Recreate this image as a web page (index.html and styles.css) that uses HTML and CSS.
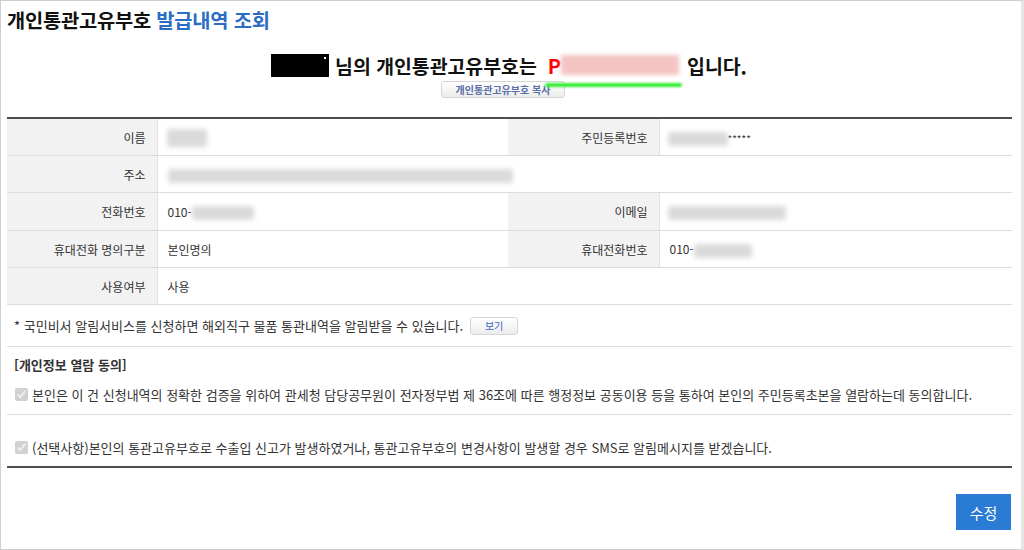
FILE: index.html
```html
<!DOCTYPE html>
<html lang="ko">
<head>
<meta charset="utf-8">
<link rel="stylesheet" href="styles.css">
</head>
<body>
<div class="frame">
  <h1 class="title">개인통관고유부호 <span class="title-blue">발급내역 조회</span></h1>

  <div class="headline">
    <span class="name-mask"><span class="dot"></span></span>
    <span class="hl-text">님의 개인통관고유부호는</span>
    <span class="code"><span class="code-p">P</span><span class="code-blur"></span><span class="code-line"></span></span>
    <span class="hl-text">입니다.</span>
  </div>
  <div class="copy-wrap"><button class="btn-small btn-copy">개인통관고유부호 복사</button></div>

  <table class="info">
    <colgroup>
      <col class="c-label"><col class="c-value"><col class="c-label2"><col>
    </colgroup>
    <tr>
      <th>이름</th>
      <td><span class="blur b-name"></span></td>
      <th>주민등록번호</th>
      <td><span class="blur b-jumin"></span><span class="stars">*****</span></td>
    </tr>
    <tr>
      <th>주소</th>
      <td colspan="3"><span class="blur b-addr"></span></td>
    </tr>
    <tr class="tall">
      <th>전화번호</th>
      <td>010-<span class="blur b-phone"></span></td>
      <th>이메일</th>
      <td><span class="blur b-email"></span></td>
    </tr>
    <tr>
      <th>휴대전화 명의구분</th>
      <td>본인명의</td>
      <th>휴대전화번호</th>
      <td>010-<span class="blur b-phone2"></span></td>
    </tr>
    <tr>
      <th>사용여부</th>
      <td colspan="3">사용</td>
    </tr>
  </table>

  <div class="notice">
    <span>* 국민비서 알림서비스를 신청하면 해외직구 물품 통관내역을 알림받을 수 있습니다.</span>
    <button class="btn-small btn-view">보기</button>
  </div>

  <div class="consent">
    <div class="consent-title">[개인정보 열람 동의]</div>
    <label class="check-row first"><input type="checkbox" checked disabled> 본인은 이 건 신청내역의 정확한 검증을 위하여 관세청 담당공무원이 전자정부법 제 36조에 따른 행정정보 공동이용 등을 통하여 본인의 주민등록초본을 열람하는데 동의합니다.</label>
    <label class="check-row second"><input type="checkbox" checked disabled> (선택사항)본인의 통관고유부호로 수출입 신고가 발생하였거나, 통관고유부호의 변경사항이 발생할 경우 SMS로 알림메시지를 받겠습니다.</label>
  </div>

  <div class="actions"><button class="btn-edit">수정</button></div>
</div>
</body>
</html>
```
FILE: styles.css
```css
html, body {
  margin: 0;
  padding: 0;
  background: #fff;
}
body {
  font-family: "Noto Sans CJK KR", "Noto Sans", sans-serif;
  color: #333;
  font-size: 12px;
}
.frame {
  width: 1024px;
  height: 550px;
  box-sizing: border-box;
  border: 1px solid #cfcfcf;
  border-right: 3px solid #e6e6e6;
  padding: 0 10px 0 6px;
  overflow: hidden;
}
.title {
  margin: 6px 0 0 0;
  font-size: 19.8px;
  line-height: 26px;
  font-weight: bold;
  color: #111;
  letter-spacing: -0.2px;
}
.title-blue {
  color: #2b6cc4;
}
.headline {
  margin-top: 19px;
  display: flex;
  justify-content: center;
  align-items: center;
  gap: 6px;
  height: 26px;
  font-size: 19.4px;
  font-weight: bold;
  color: #111;
  padding-left: 0;
}
.name-mask {
  display: inline-block;
  width: 58px;
  height: 23px;
  background: #000;
  position: relative;
}
.dot {
  position: absolute;
  right: 3px;
  top: 3px;
  width: 2px;
  height: 2px;
  background: #fff;
}
.code {
  display: inline-flex;
  align-items: center;
  position: relative;
  margin-left: 5px;
  margin-right: 2px;
}
.code-p {
  color: #f00;
  font-size: 20px;
}
.code-blur {
  display: inline-block;
  width: 118px;
  height: 20px;
  background: #f3c4c2;
  filter: blur(2px);
}
.code-line {
  position: absolute;
  left: -3px;
  right: -3px;
  bottom: -7px;
  height: 4px;
  border-radius: 2px;
  background: #33ee33;
  filter: blur(1px);
}
.copy-wrap {
  display: flex;
  justify-content: center;
  margin-top: 3px;
  padding-right: 12px;
}
.btn-small {
  font-family: "Noto Sans CJK KR", sans-serif;
  font-size: 10px;
  font-weight: bold;
  line-height: 14px;
  padding: 0;
  border: 1px solid #d6d6d6;
  border-radius: 3px;
  background: linear-gradient(#ffffff, #ececec);
  color: #5b6fa8;
}
.btn-copy {
  width: 124px;
  height: 17px;
}
.btn-view {
  width: 48px;
  height: 18px;
  color: #3d63c6;
  font-weight: normal;
  margin-left: 7px;
}
.info {
  margin-top: 19px;
  width: 1005px;
  border-collapse: collapse;
  table-layout: fixed;
  border-top: 2px solid #4d4d4d;
}
.c-label { width: 150px; }
.c-value { width: 351px; }
.c-label2 { width: 151px; }
.info th, .info td {
  height: 36px;
  padding: 0;
  border-bottom: 1px solid #dcdcdc;
  font-size: 12px;
  font-weight: normal;
  color: #333;
}
.info tr.tall th, .info tr.tall td {
  height: 37px;
}
.info th {
  background: #f2f2f2;
  text-align: right;
  padding-right: 11px;
  border-right: 1px solid #e4e4e4;
}
.info td {
  padding-left: 10px;
  background: #fff;
}
.blur {
  display: inline-block;
  vertical-align: middle;
  height: 14px;
  background: #dadada;
  filter: blur(2.5px);
  border-radius: 3px;
}
.b-name { width: 40px; height: 18px; margin-left: -1px; }
.b-jumin { width: 60px; margin-left: -2px; }
.b-addr { width: 345px; }
.b-phone { width: 62px; }
.b-email { width: 118px; margin-left: -2px; }
.b-phone2 { width: 58px; }
.stars {
  font-size: 10px;
  vertical-align: middle;
}
.notice {
  display: flex;
  align-items: center;
  height: 42px;
  padding-left: 7px;
  border-bottom: 1px solid #dcdcdc;
  box-sizing: border-box;
  width: 1005px;
  font-size: 13px;
}
.consent {
  width: 1005px;
  border-bottom: 2px solid #4d4d4d;
  font-size: 13px;
}
.consent-title {
  font-weight: bold;
  padding: 9px 7px 0 7px;
  line-height: 18px;
}
.check-row {
  display: flex;
  align-items: center;
  padding-left: 7px;
  color: #333;
}
.check-row input {
  margin: 0 4px 0 1px;
  width: 13px;
  height: 13px;
}
.check-row.first {
  height: 41px;
  padding-top: 0;
  border-bottom: 1px solid #dcdcdc;
  box-sizing: border-box;
}
.check-row.second {
  height: 51px;
  padding-top: 14px;
  box-sizing: border-box;
}
.actions {
  width: 1005px;
  display: flex;
  justify-content: flex-end;
  margin-top: 26px;
}
.btn-edit {
  width: 55px;
  height: 36px;
  border: none;
  background: #2a7bd3;
  color: #fff;
  font-family: "Noto Sans CJK KR", sans-serif;
  font-size: 15px;
  padding: 0;
  margin-right: 1px;
}
```
